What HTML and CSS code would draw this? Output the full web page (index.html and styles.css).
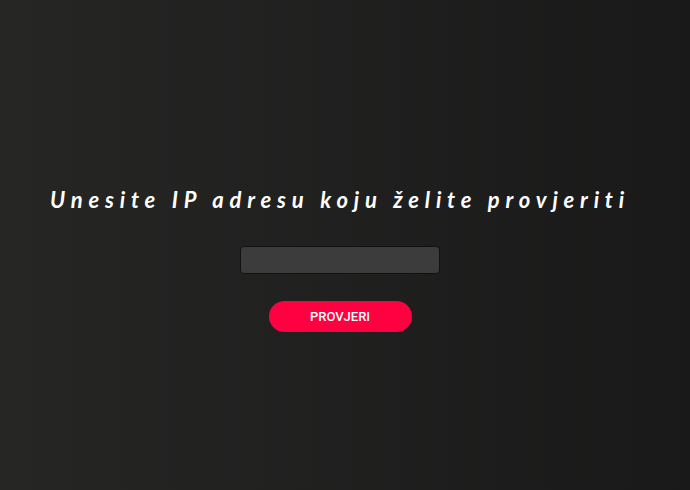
FILE: index.html
```html
<!DOCTYPE html>
<html lang="hr">
<head>
<meta charset="utf-8">
<title>Provjera IP adrese</title>
<link rel="stylesheet" href="styles.css">
</head>
<body>
<main class="page">
  <h1 class="title">Unesite IP adresu koju želite provjeriti</h1>
  <input class="ip-input" type="text" aria-label="IP adresa">
  <button class="check-btn" type="button">PROVJERI</button>
</main>
</body>
</html>
```
FILE: styles.css
```css
html, body {
  margin: 0;
  padding: 0;
  height: 100%;
}
body {
  background: linear-gradient(to right, #262625, #191919);
  font-family: "Lato", "Open Sans", sans-serif;
}
.page {
  height: 100%;
  display: flex;
  flex-direction: column;
  align-items: center;
  justify-content: center;
  padding: 28px 10px 0 0;
  box-sizing: border-box;
}
.title {
  margin: 0 0 32px 0;
  color: #fff;
  font-size: 22px;
  font-weight: 700;
  font-style: italic;
  letter-spacing: 5.8px;
  line-height: 28px;
}
.ip-input {
  width: 200px;
  height: 28px;
  box-sizing: border-box;
  background: #3c3c3c;
  border: 1px solid #111;
  border-radius: 4px;
  outline: none;
  color: #fff;
  margin: 0 0 27px 0;
}
.check-btn {
  width: 143px;
  height: 31px;
  border: none;
  border-radius: 16px;
  background: #ff0040;
  color: #fff;
  font-family: "Roboto", "Liberation Sans", sans-serif;
  font-weight: 500;
  font-size: 13px;
  cursor: pointer;
}
```
